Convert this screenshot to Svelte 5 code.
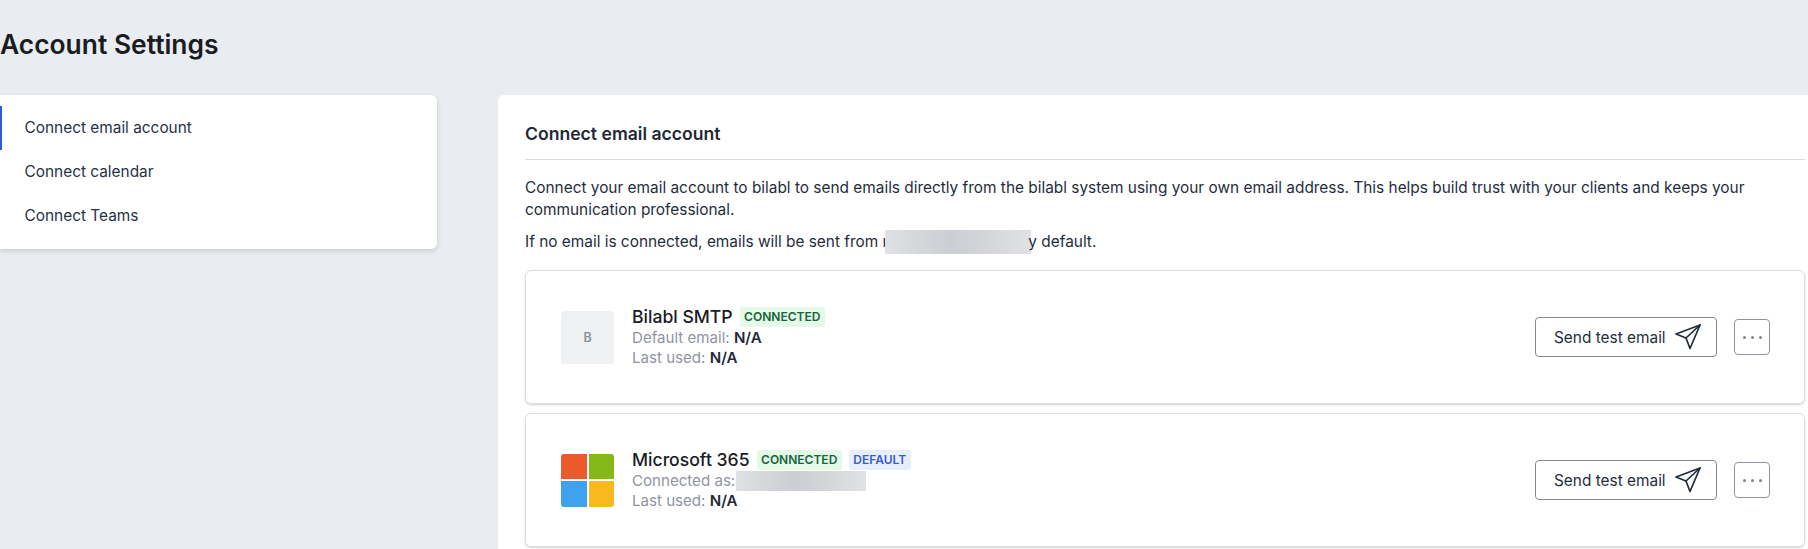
<script>
	const navItems = ['Connect email account', 'Connect calendar', 'Connect Teams'];
</script>

{#snippet sendButton()}
	<div class="actions">
		<button class="send">
			Send test email
			<svg width="28" height="28" viewBox="0 0 28 28" fill="none" stroke="#1f2d3d" stroke-width="1.7" stroke-linejoin="round" stroke-linecap="round">
				<path d="M2 11 L26 2 L16 25.5 L12 15 Z" />
				<path d="M12 15 L26 2" />
			</svg>
		</button>
		<button class="more" aria-label="More">
			<span></span><span></span><span></span>
		</button>
	</div>
{/snippet}

<div class="page">
	<h1>Account Settings</h1>
	<div class="columns">
		<nav class="sidebar">
			{#each navItems as item, i}
				<div class="nav-item" class:active={i === 0}>{item}</div>
			{/each}
		</nav>

		<main class="panel">
			<h2>Connect email account</h2>
			<p class="first">Connect your email account to bilabl to send emails directly from the bilabl system using your own email address. This helps build trust with your clients and keeps your communication professional.</p>
			<p class="second">If no email is connected, emails will be sent from r<span class="blur mail"></span>y default.</p>

			<div class="card">
				<div class="logo letter">B</div>
				<div class="info">
					<div class="name-row">
						<span class="name">Bilabl SMTP</span>
						<span class="badge green">CONNECTED</span>
					</div>
					<div class="meta">Default email: <b>N/A</b></div>
					<div class="meta">Last used: <b>N/A</b></div>
				</div>
				{@render sendButton()}
			</div>

			<div class="card">
				<div class="logo ms">
					<i class="red"></i><i class="lime"></i><i class="blue"></i><i class="yellow"></i>
				</div>
				<div class="info">
					<div class="name-row">
						<span class="name">Microsoft 365</span>
						<span class="badge green">CONNECTED</span>
						<span class="badge indigo">DEFAULT</span>
					</div>
					<div class="meta as">Connected as:<span class="blur acct"></span></div>
					<div class="meta">Last used: <b>N/A</b></div>
				</div>
				{@render sendButton()}
			</div>
		</main>
	</div>
</div>

<style>
	:global(body) {
		background: #e9ecf1;
		font-family: Inter, "Liberation Sans", sans-serif;
		color: #1f2937;
		overflow: hidden;
	}
	.page {
		height: 549px;
		overflow: hidden;
	}
	h1 {
		margin: 0;
		padding-top: 28px;
		height: 67px;
		box-sizing: border-box;
		font-size: 26.4px;
		line-height: 32px;
		font-weight: 600;
		color: #1a1c1f;
	}
	.columns {
		display: flex;
		align-items: flex-start;
		gap: 61px;
		margin-top: 28px;
	}
	.sidebar {
		width: 437px;
		flex: none;
		box-sizing: border-box;
		padding: 11px 0 11px;
		background: #fff;
		border-radius: 0 6px 6px 0;
		box-shadow: 0 2px 5px rgba(40, 50, 70, 0.18);
	}
	.nav-item {
		height: 44px;
		line-height: 44px;
		padding-left: 24.5px;
		font-size: 15.4px;
		color: #263244;
	}
	.nav-item.active {
		box-shadow: inset 2px 0 0 #2f5fd0;
	}
	.panel {
		flex: 1;
		box-sizing: border-box;
		padding: 0 3px 0 27px;
		background: #fff;
		border-radius: 6px 0 0 0;
		height: 460px;
	}
	h2 {
		margin: 0;
		height: 65px;
		line-height: 78px;
		box-sizing: border-box;
		border-bottom: 1px solid #d9dce0;
		font-size: 17.6px;
		font-weight: 600;
		color: #1f2937;
	}
	p {
		margin: 0;
		font-size: 15.4px;
		line-height: 22px;
		color: #1f2d3d;
	}
	.first {
		margin-top: 17px;
	}
	.second {
		margin-top: 9px;
	}
	.blur {
		display: inline-block;
		height: 20px;
		vertical-align: -5px;
		background: linear-gradient(90deg, #dfe1e4, #cbced2 45%, #d2d4d8 65%, #e0e2e4);
	}
	.mail {
		width: 146px;
		height: 24px;
		vertical-align: -7px;
		margin-left: -3px;
		margin-right: -3px;
	}
	.card {
		display: flex;
		align-items: center;
		height: 134px;
		box-sizing: border-box;
		padding: 0 34px 0 35px;
		border: 1px solid #dadde1;
		border-radius: 6px;
		box-shadow: 0 1px 2px rgba(40, 50, 70, 0.22);
		margin-bottom: 9px;
	}
	.second + .card {
		margin-top: 16px;
	}
	.logo {
		width: 53px;
		height: 53px;
		flex: none;
		border-radius: 3px;
		margin-right: 18px;
	}
	.letter {
		display: flex;
		align-items: center;
		justify-content: center;
		background: #f0f1f3;
		color: #8a9099;
		font-size: 12.5px;
		font-weight: 600;
	}
	.ms {
		display: grid;
		grid-template-columns: 1fr 1fr;
		grid-template-rows: 1fr 1fr;
		gap: 2px;
		overflow: hidden;
	}
	.red { background: #ec5a2c; }
	.lime { background: #84b817; }
	.blue { background: #3fa2ee; }
	.yellow { background: #f8b91f; }
	.info {
		flex: 1;
	}
	.name-row {
		display: flex;
		align-items: center;
		gap: 7px;
		height: 20px;
		margin-bottom: 1px;
	}
	.name {
		font-size: 17.6px;
		font-weight: 500;
		color: #1a1c1f;
	}
	.badge {
		font-size: 12px;
		font-weight: 600;
		line-height: 20px;
		padding: 0 4.5px;
		border-radius: 3px;
	}
	.green {
		background: #e4f9e6;
		color: #14653f;
	}
	.indigo {
		background: #e6effd;
		color: #3b5bcf;
	}
	.meta {
		font-size: 15.1px;
		line-height: 20px;
		color: #8f95a0;
	}
	.meta b {
		font-weight: 600;
		color: #1f2937;
	}
	.acct {
		width: 130px;
		margin-left: 1px;
	}
	.actions {
		display: flex;
		align-items: center;
		gap: 17px;
	}
	button {
		background: #fff;
		font-family: inherit;
		cursor: pointer;
	}
	.send {
		display: flex;
		align-items: center;
		justify-content: space-between;
		width: 182px;
		height: 40px;
		padding: 0 14px 0 18px;
		border: 1px solid #7f8a96;
		border-radius: 4px;
		font-size: 15.4px;
		color: #1f2d3d;
	}
	.more {
		display: flex;
		align-items: center;
		justify-content: center;
		gap: 5px;
		width: 36px;
		height: 36px;
		padding: 0;
		border: 1px solid #8a94a0;
		border-radius: 4px;
	}
	.more span {
		width: 3px;
		height: 3px;
		border-radius: 50%;
		background: #7d8691;
	}
</style>
